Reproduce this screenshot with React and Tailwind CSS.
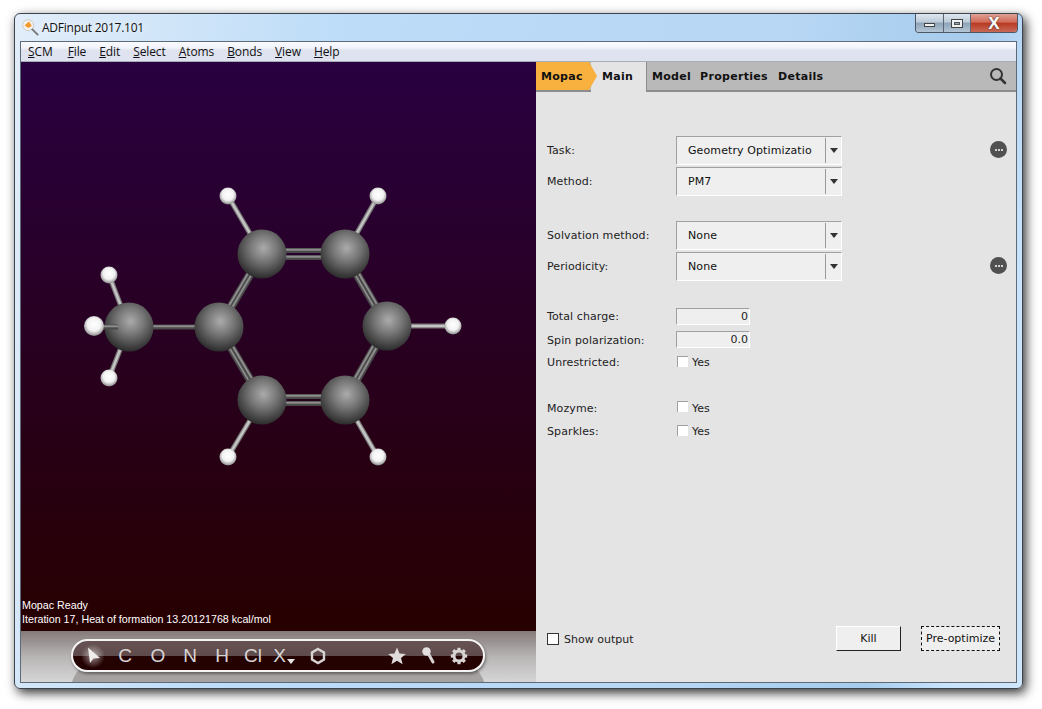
const tahoma = "font-['DejaVu_Sans',sans-serif]";

function Molecule() {
  const c = [[262,254],[345,254],[387,326],[345,400],[262,400],[219,327]];
  const ring = [[0,1,0,3.5],[1,2,3,1.5],[2,3,3,-1.5],[3,4,0,3.5],[4,5,3,1.5],[5,0,3,-1.5]];
  const hb = [[262,254,228,196],[345,254,378,196],[387,326,453,326],[345,400,378,457],[262,400,228,457]];
  const bond = (x1,y1,x2,y2,k) => (
    <g key={k}>
      <line x1={x1} y1={y1} x2={x2} y2={y2} stroke="#4a4a4a" strokeWidth="5"/>
      <line x1={x1} y1={y1-0.7} x2={x2} y2={y2-0.7} stroke="#8d8d8d" strokeWidth="2"/>
    </g>
  );
  const hbond = (x1,y1,x2,y2,k) => (
    <g key={k}>
      <line x1={x1} y1={y1} x2={x2} y2={y2} stroke="#777" strokeWidth="5"/>
      <line x1={x1} y1={y1} x2={x2} y2={y2} stroke="#c4c4c4" strokeWidth="2.5"/>
    </g>
  );
  const H = (x,y,r=8.5) => <circle key={x+'-'+y} cx={x} cy={y} r={r} fill="url(#hAtom)"/>;
  return (
    <svg viewBox="21 62 515 540" className="block w-[515px] h-[540px] shrink-0">
      <defs>
        <radialGradient id="cAtom" cx="0.53" cy="0.38" r="0.62">
          <stop offset="0" stopColor="#ababab"/>
          <stop offset="0.45" stopColor="#767676"/>
          <stop offset="0.85" stopColor="#404040"/>
          <stop offset="1" stopColor="#2c2c2c"/>
        </radialGradient>
        <radialGradient id="hAtom" cx="0.5" cy="0.42" r="0.6">
          <stop offset="0" stopColor="#ffffff"/>
          <stop offset="0.55" stopColor="#f2f2f2"/>
          <stop offset="0.9" stopColor="#9a9a9a"/>
          <stop offset="1" stopColor="#777"/>
        </radialGradient>
        <radialGradient id="glow">
          <stop offset="0" stopColor="#fff" stopOpacity="0.55"/>
          <stop offset="1" stopColor="#fff" stopOpacity="0"/>
        </radialGradient>
      </defs>
      {hb.map((b,i)=>hbond(...b,'h'+i))}
      {hbond(129,327,109,275,'m1')}
      {hbond(129,327,109,378,'m2')}
      {bond(129,327,219,327,'mc')}
      {ring.map(([a,b,dx,dy],i)=>(
        <g key={i}>
          {bond(c[a][0]-dx,c[a][1]-dy,c[b][0]-dx,c[b][1]-dy,'a')}
          {bond(c[a][0]+dx,c[a][1]+dy,c[b][0]+dx,c[b][1]+dy,'b')}
        </g>
      ))}
      {c.map(([x,y],i)=><circle key={i} cx={x} cy={y} r="24.5" fill="url(#cAtom)"/>)}
      <circle cx="129" cy="327" r="24.5" fill="url(#cAtom)"/>
      {bond(94,327,118,327,'f')}
      {[[228,196],[378,196],[453,326],[378,457],[228,457],[109,275],[109,378]].map(([x,y])=>H(x,y))}
      {H(94,326,10)}
    </svg>
  );
}

function Dropdown({ value, className = '' }) {
  return (
    <div className={`flex w-[166px] h-[29px] bg-[#efefef] border border-t-[#a0a0a0] border-l-[#a0a0a0] border-r-white border-b-white ${className}`}>
      <div className="w-[148px] pl-[11px] leading-[27px] text-[11px] text-[#111] whitespace-nowrap overflow-hidden tracking-[0.1px]">{value}</div>
      <div className="w-px my-px bg-[#9a9a9a]"/>
      <div className="flex-1 flex items-center justify-center">
        <div className="w-0 h-0 border-x-[4px] border-x-transparent border-t-[5px] border-t-[#333]"/>
      </div>
    </div>
  );
}

function Row({ label, children, more, className = '' }) {
  return (
    <div className={`flex items-center ${className}`}>
      <div className="w-[129px] pt-[2px] text-[11px] text-[#222] whitespace-nowrap tracking-[0.1px]">{label}</div>
      {children}
      {more && (
        <div className="ml-auto mr-[9px] mb-[2px] w-[17px] h-[17px] rounded-full bg-[#505050] flex items-center justify-center gap-px">
          <span className="w-[2px] h-[2px] bg-white rounded-full"/>
          <span className="w-[2px] h-[2px] bg-white rounded-full"/>
          <span className="w-[2px] h-[2px] bg-white rounded-full"/>
        </div>
      )}
    </div>
  );
}

function NumField({ value }) {
  return (
    <div className="w-[74px] h-[17px] bg-[#efefef] border border-t-[#a0a0a0] border-l-[#a0a0a0] border-r-white border-b-white text-right pr-[1px] text-[11px] leading-[16px] text-[#222]">{value}</div>
  );
}

function Check({ className = '' }) {
  return (
    <div className={`flex items-center text-[11px] text-[#222] ${className}`}>
      <div className="w-[11px] h-[11px] ml-px mb-[2px] bg-white border-t border-l border-[#a0a0a0] mr-[4px]"/>
      <span className="pt-[2px]">Yes</span>
    </div>
  );
}

const toolText = "w-8 text-center text-[19px] leading-none text-[#d8d4d4] font-['Liberation_Sans',sans-serif]";

function Toolbar() {
  return (
    <div className="relative h-[51px] shrink-0 pl-[50px] pt-[8px] bg-[linear-gradient(180deg,#857a7a_0%,#b8b4b4_50%,#d6d6d6_100%)] overflow-hidden">
      <div className="absolute left-[50px] top-[29px] w-[414px] h-[60px] rounded-[30px] bg-[#a6a2a2]"/>
      <div className="relative flex items-center w-[414px] h-[33px] rounded-full border-2 border-[#f4f4f4] bg-[linear-gradient(180deg,#665252_0%,#5f4b4b_52%,#250202_53%,#250202_100%)] shadow-[1px_2px_3px_rgba(0,0,0,0.4)] pl-[5px]">
        <div className="w-8 flex justify-center">
          <svg width="24" height="24" viewBox="0 0 24 24">
            <circle cx="11" cy="12" r="12" fill="url(#glow)"/>
            <path d="M6 3.5 L18 14 L11.5 14.5 L8 19 Z" fill="#f0ecec"/>
          </svg>
        </div>
        <div className={toolText + " mr-[1px] ml-[-1px]"}>C</div>
        <div className={toolText}>O</div>
        <div className={toolText}>N</div>
        <div className={toolText}>H</div>
        <div className={toolText + " ml-[-1px] mr-[1px]"}>Cl</div>
        <div className="w-8 ml-[-2px] mr-[2px] flex justify-center items-end text-[#d8d4d4] font-['Liberation_Sans',sans-serif]">
          <span className="text-[19px] leading-none">X</span>
          <span className="w-0 h-0 mb-[1px] ml-px border-x-[4px] border-x-transparent border-t-[5px] border-t-[#e8e4e4]"/>
        </div>
        <div className="w-8 flex justify-center">
          <svg width="18" height="18" viewBox="0 0 18 18">
            <path d="M9 2 L15 5.5 L15 12.5 L9 16 L3 12.5 L3 5.5 Z" fill="none" stroke="#d8d4d4" strokeWidth="2.4"/>
          </svg>
        </div>
        <div className="w-[47px]"/>
        <div className="w-8 flex justify-center">
          <svg width="20" height="20" viewBox="0 0 20 20">
            <path d="M10 1.5 L12.5 7.5 L18.8 8 L14 12 L15.6 18.2 L10 14.8 L4.4 18.2 L6 12 L1.2 8 L7.5 7.5 Z" fill="#e0dcdc"/>
          </svg>
        </div>
        <div className="w-8 flex justify-center">
          <svg width="18" height="20" viewBox="0 0 18 20">
            <line x1="8" y1="7" x2="13" y2="16" stroke="#d8d4d4" strokeWidth="3" strokeLinecap="round"/>
            <circle cx="6.5" cy="5.5" r="4.2" fill="#e4e0e0"/>
          </svg>
        </div>
        <div className="w-[28px] flex justify-center">
          <svg width="18" height="18" viewBox="0 0 18 18">
            <circle cx="9" cy="9" r="5" fill="none" stroke="#d8d4d4" strokeWidth="3"/>
            {[0,45,90,135,180,225,270,315].map(a=>(
              <rect key={a} x="7.4" y="0.8" width="3.2" height="3.6" fill="#d8d4d4" transform={`rotate(${a} 9 9)`}/>
            ))}
          </svg>
        </div>
      </div>
    </div>
  );
}

export default function App() {
  return (
    <div className="w-[1042px] h-[709px] bg-white pl-[14px] pt-[13px] overflow-hidden">
      <div className="relative w-[1009px] h-[676px] rounded-[6px] border border-[#3c4450] shadow-[3px_4px_11px_rgba(0,0,0,0.8)] bg-[linear-gradient(100deg,#e2edf9_0%,#bcdcf8_30%,#b6d6f4_70%,#a6cbec_86%,#c8e3fc_93%,#cfe6fb_100%)] px-[5px] pb-[5px] flex flex-col">
        <div className="h-[27px] shrink-0 flex items-center relative">
          <svg width="20" height="20" viewBox="0 0 22 22" className="ml-[0px] mt-[-2px]">
            <circle cx="9" cy="9" r="6" fill="#f6f2ee" stroke="#c8c4c0"/>
            <path d="M5 9 L10 5 L13 10 L9 12 Z" fill="#f39a2e"/>
            <line x1="13" y1="13" x2="20" y2="20" stroke="#777" strokeWidth="2"/>
          </svg>
          <span className="ml-[2px] text-[12px] text-[#111] tracking-[-0.25px] font-['Open_Sans',sans-serif] [text-shadow:0_0_6px_white]">ADFinput 2017.101</span>
          <div className="ml-auto mr-[-1px] self-start flex h-[19px] w-[103px] border border-t-0 border-[#4c5866] rounded-b-[4px] overflow-hidden">
            <div className="w-[28px] border-r border-[#5a6676] bg-[linear-gradient(180deg,#dfe7ef_0%,#bccbd9_45%,#8ea3b8_50%,#b4c6d6_100%)] flex items-center justify-center">
              <div className="w-[11px] h-[4px] mt-[3px] bg-[#eef1f4] border border-[#444]"/>
            </div>
            <div className="w-[27px] border-r border-[#5a6676] bg-[linear-gradient(180deg,#dfe7ef_0%,#bccbd9_45%,#8ea3b8_50%,#b4c6d6_100%)] flex items-center justify-center">
              <div className="w-[12px] h-[9px] bg-[#eef1f4] border border-[#444] flex items-center justify-center"><div className="w-[6px] h-[3px] bg-[#8ea3b8] border border-[#555]"/></div>
            </div>
            <div className="flex-1 bg-[linear-gradient(180deg,#e0a294_0%,#d26a58_45%,#b83a22_52%,#c96a58_100%)] flex items-center justify-center">
              <span className="text-[17px] leading-none font-bold text-white font-['Liberation_Sans',sans-serif] [text-shadow:0_0_2px_#333]">X</span>
            </div>
          </div>
        </div>
        <div className="flex-1 flex flex-col border border-[#5d6b78] bg-[#e4e4e4] min-h-0">
          <div className="h-[20px] shrink-0 flex items-center gap-[13px] pl-[7px] border-b border-[#a6acb8] bg-[linear-gradient(180deg,#fafbfe_0%,#f2f4fb_30%,#dfe3f0_45%,#dfe3f0_100%)] text-[12px] text-[#111] font-['Open_Sans',sans-serif] tracking-[-0.1px]">
            <span className="mr-[2px]"><u>S</u>CM</span>
            <span><u>F</u>ile</span>
            <span><u>E</u>dit</span>
            <span><u>S</u>elect</span>
            <span><u>A</u>toms</span>
            <span><u>B</u>onds</span>
            <span><u>V</u>iew</span>
            <span><u>H</u>elp</span>
          </div>
          <div className="flex-1 flex min-h-0">
            <div className="w-[515px] shrink-0 flex flex-col">
              <div className="flex-1 flex flex-col min-h-0 bg-[linear-gradient(180deg,#290040_0%,#270000_100%)]">
                <Molecule/>
                <div className="pl-[1px] text-[10.7px] leading-[14px] text-white font-['Liberation_Sans',sans-serif]">
                  <div className="mt-[-4px]">Mopac Ready</div>
                  <div>Iteration 17, Heat of formation 13.20121768 kcal/mol</div>
                </div>
              </div>
              <Toolbar/>
            </div>
            <div className={`flex-1 flex flex-col bg-[#e4e4e4] ${tahoma}`}>
              <div className="h-[30px] shrink-0 flex items-stretch bg-[#b9b9b9] border-b-2 border-[#8c8c8c] text-[11px] font-bold text-[#111] tracking-[0.3px]">
                <div className="w-[61px] pl-[5px] leading-[29px] bg-[#f8b13e] [clip-path:polygon(0_0,53px_0,100%_50%,53px_100%,0_100%)] relative z-10">Mopac</div>
                <div className="w-[56px] ml-[-6px] pl-[11px] leading-[29px] h-[30px] bg-[#e4e4e4] border-r border-[#8c8c8c]">Main</div>
                <div className="pl-[5px] leading-[29px]">Model</div>
                <div className="pl-[9px] leading-[29px]">Properties</div>
                <div className="pl-[10px] leading-[29px]">Details</div>
                <div className="ml-auto mr-[9px] flex items-center">
                  <svg width="18" height="18" viewBox="0 0 18 18" fill="none" stroke="#333" strokeWidth="2">
                    <circle cx="7.5" cy="7.5" r="5.5"/>
                    <line x1="11.5" y1="11.5" x2="16" y2="16" strokeLinecap="round" strokeWidth="2.5"/>
                  </svg>
                </div>
              </div>
              <div className="flex-1 pl-[11px] pt-[44px] flex flex-col min-h-0">
                <Row label="Task:" more><Dropdown value="Geometry Optimizatio"/></Row>
                <Row label="Method:" className="mt-[2px]"><Dropdown value="PM7"/></Row>
                <Row label="Solvation method:" className="mt-[25px]"><Dropdown value="None"/></Row>
                <Row label="Periodicity:" more className="mt-[2px]"><Dropdown value="None"/></Row>
                <Row label="Total charge:" className="mt-[26px]"><NumField value="0"/></Row>
                <Row label="Spin polarization:" className="mt-[5px]"><NumField value="0.0"/></Row>
                <Row label="Unrestricted:" className="mt-[4px]"><Check/></Row>
                <Row label="Mozyme:" className="mt-[27px]"><Check/></Row>
                <Row label="Sparkles:" className="mt-[5px]"><Check/></Row>
                <div className="mt-auto mb-[31px] flex items-center pr-[16px]">
                  <div className="w-[12px] h-[12px] bg-white border border-[#333] mr-[5px]"/>
                  <span className="text-[11px] text-[#222] pt-[3px]">Show output</span>
                  <button className="ml-auto w-[65px] h-[25px] pt-[2px] bg-[#efefef] border border-t-white border-l-white border-r-[#222] border-b-[#222] text-[11px] text-[#111]">Kill</button>
                  <button className="ml-[20px] w-[79px] h-[25px] pt-[2px] bg-[#efefef] border border-dashed border-[#111] text-[11px] text-[#111]">Pre-optimize</button>
                </div>
              </div>
            </div>
          </div>
        </div>
      </div>
    </div>
  );
}
